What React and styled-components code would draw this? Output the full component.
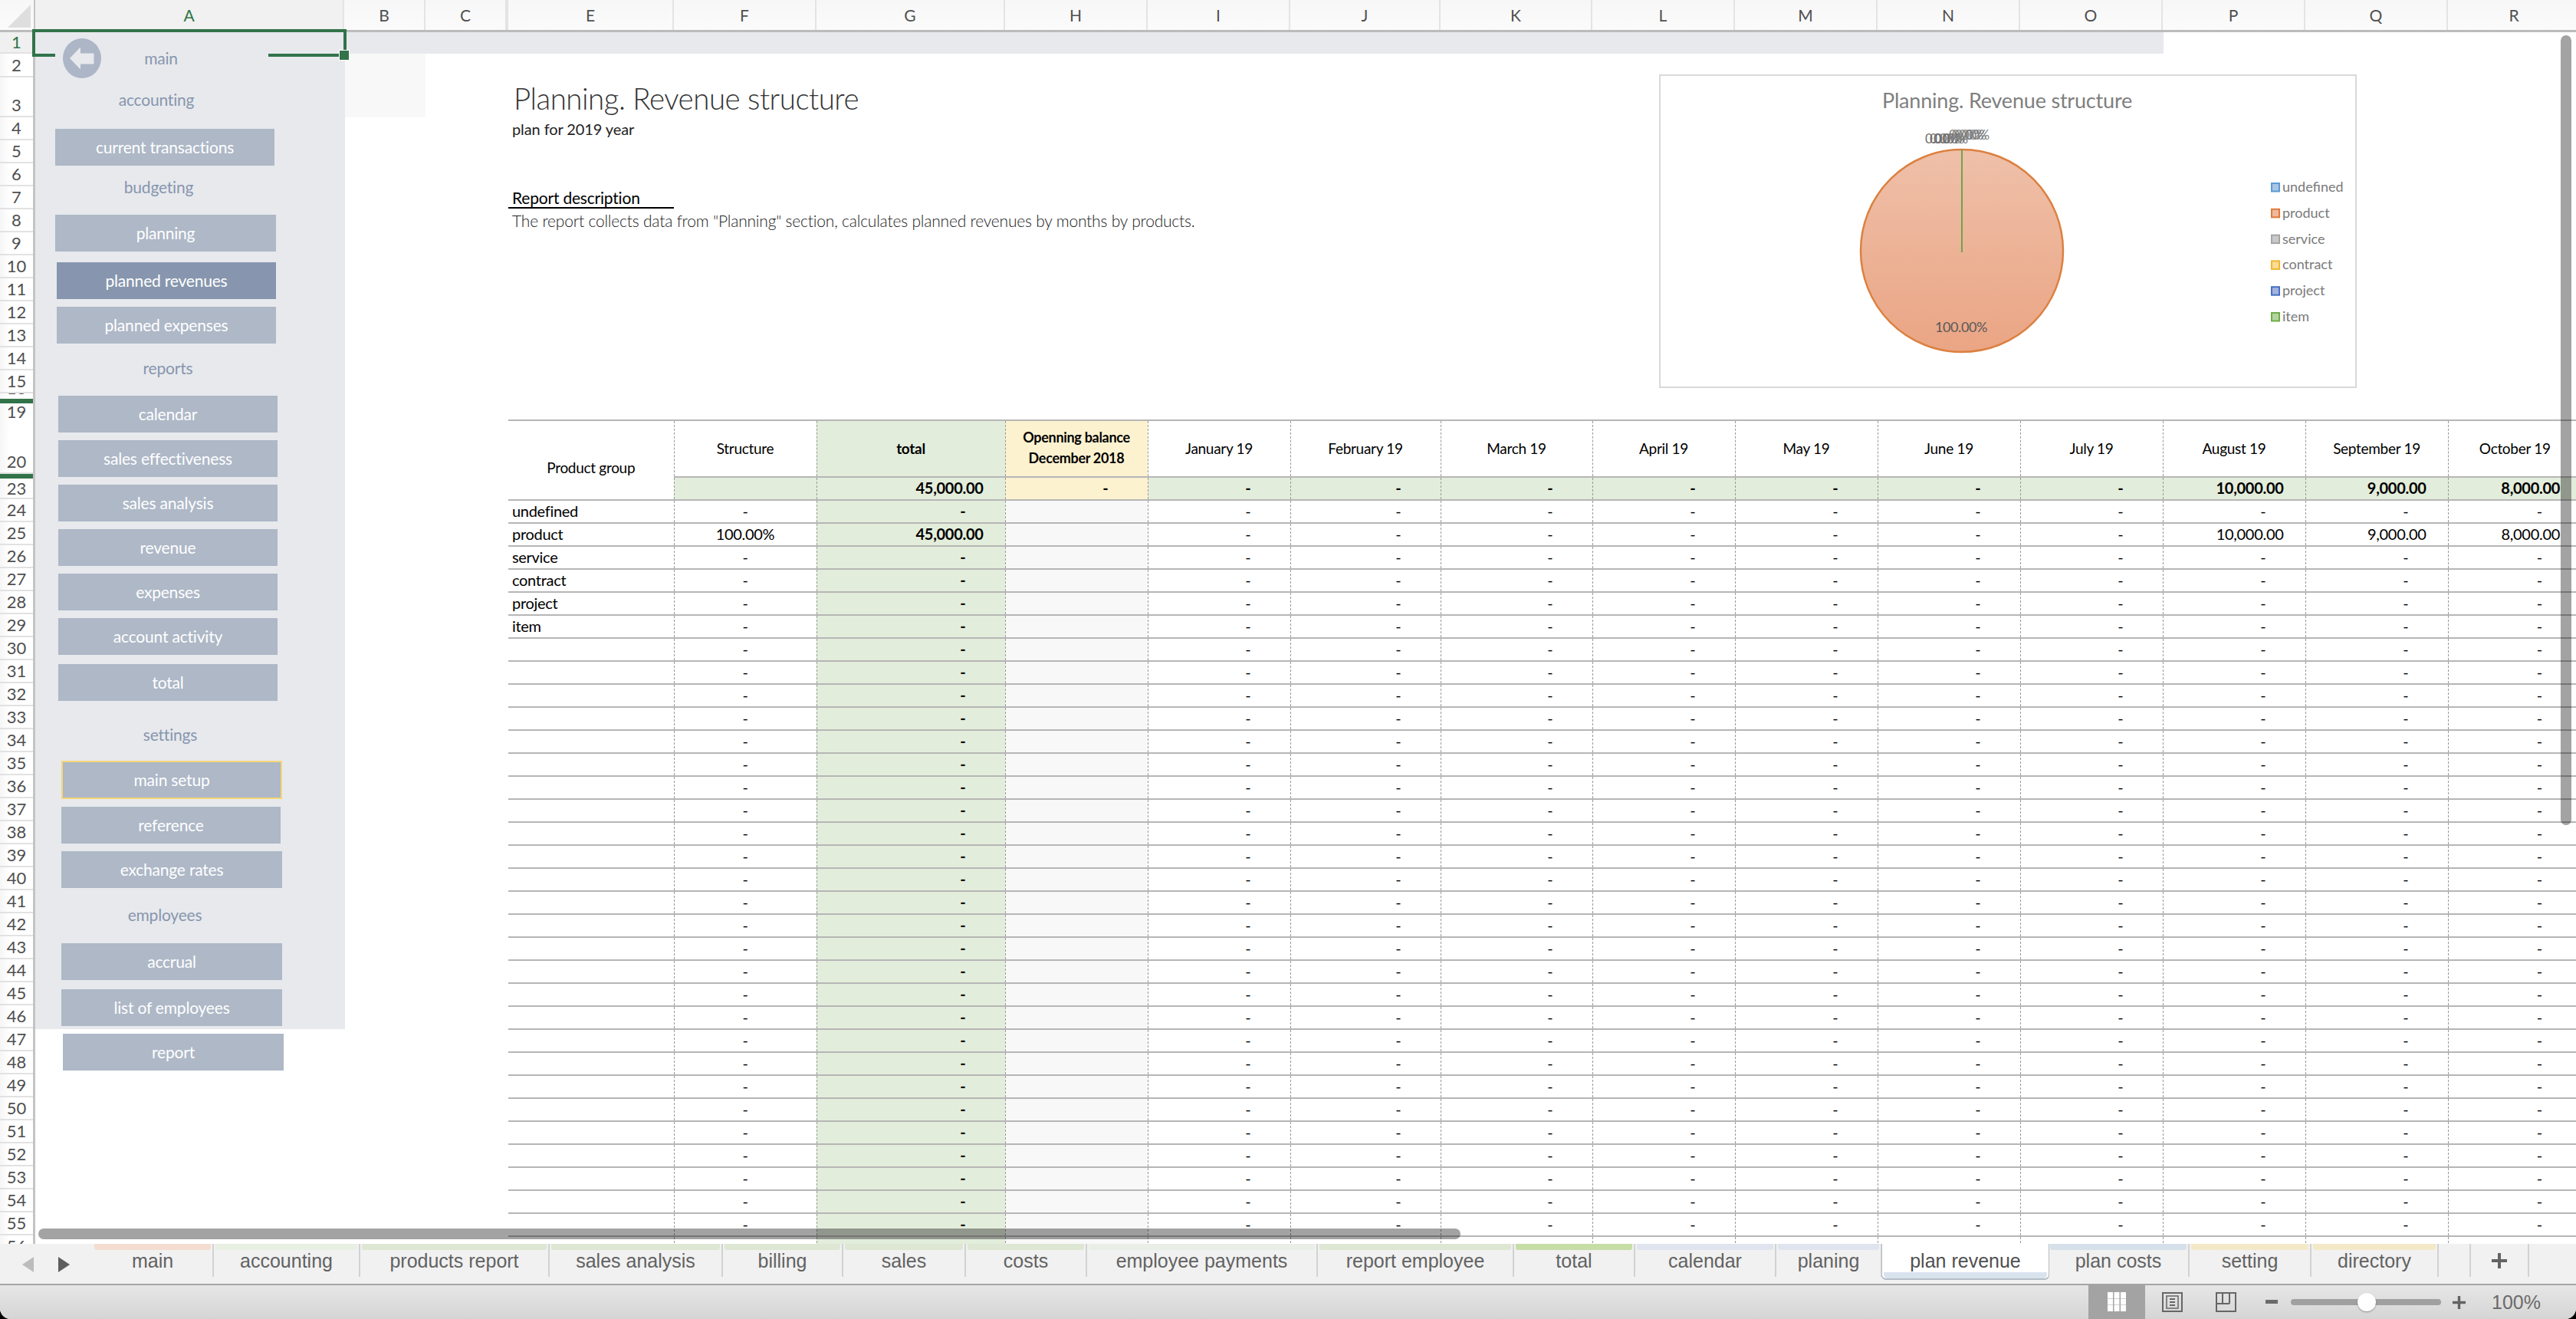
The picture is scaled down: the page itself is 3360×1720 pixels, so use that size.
import React from "react";
import styled, { createGlobalStyle } from "styled-components";

const GlobalStyle = createGlobalStyle`
  html, body {
    margin: 0;
    padding: 0;
    width: 3360px;
    height: 1720px;
    overflow: hidden;
    background: #000;
  }
  #root { height: 100%; }
`;

const SHEET_FONT = `"Lato", "Open Sans", sans-serif`;
const TAB_FONT = `"Liberation Sans", Arial, sans-serif`;

// column letters and their pixel widths, D is squeezed to almost nothing
const COLUMNS = [
  ["A", 403], ["B", 106], ["C", 106], ["", 2], ["E", 216], ["F", 186], ["G", 246], ["H", 186],
  ["I", 186], ["J", 196], ["K", 198], ["L", 186], ["M", 186], ["N", 186], ["O", 186], ["P", 186],
  ["Q", 186], ["R", 174],
];

const TABLE_WIDTHS = COLUMNS.slice(4).map((c) => c[1]);

const ROW_HEADS = [
  { n: 1, h: 28, active: true }, { n: 2, h: 31 }, { n: 3, h: 52, low: true },
  ...Array.from({ length: 12 }, (_, i) => ({ n: i + 4, h: 30 })),
  { n: 16, h: 7, low: true, cut: true }, { bar: true },
  { n: 19, h: 21, cut: true }, { n: 20, h: 71, low: true }, { bar: true }, { n: 23, h: 27 },
  ...Array.from({ length: 33 }, (_, i) => ({ n: i + 24, h: 30 })),
];

const NAV = [
  { kind: "label", text: "accounting", mt: 10, ml: 14 },
  { kind: "btn", text: "current transactions", mt: 20, ml: 26, w: 286 },
  { kind: "label", text: "budgeting", mt: 10, ml: 17 },
  { kind: "btn", text: "planning", mt: 18, ml: 26, w: 288 },
  { kind: "btn", text: "planned revenues", mt: 14, ml: 28, w: 286, on: true },
  { kind: "btn", text: "planned expenses", mt: 10, ml: 28, w: 286 },
  { kind: "label", text: "reports", mt: 14, ml: 29 },
  { kind: "btn", text: "calendar", mt: 18, ml: 30, w: 286 },
  { kind: "btn", text: "sales effectiveness", mt: 10, ml: 30, w: 286 },
  { kind: "btn", text: "sales analysis", mt: 10, ml: 30, w: 286 },
  { kind: "btn", text: "revenue", mt: 10, ml: 30, w: 286 },
  { kind: "btn", text: "expenses", mt: 10, ml: 30, w: 286 },
  { kind: "btn", text: "account activity", mt: 10, ml: 30, w: 286 },
  { kind: "btn", text: "total", mt: 12, ml: 30, w: 286 },
  { kind: "label", text: "settings", mt: 26, ml: 32 },
  { kind: "btn", text: "main setup", mt: 16, ml: 34, w: 288, mark: true },
  { kind: "btn", text: "reference", mt: 10, ml: 34, w: 286 },
  { kind: "btn", text: "exchange rates", mt: 10, ml: 34, w: 288 },
  { kind: "label", text: "employees", mt: 17, ml: 25 },
  { kind: "btn", text: "accrual", mt: 19, ml: 34, w: 288 },
  { kind: "btn", text: "list of employees", mt: 12, ml: 34, w: 288 },
];

const TABS = [
  ["main", 158, "#f4ddd0"], ["accounting", 191, "#e8efe3"], ["products report", 247, "#dde7d3"],
  ["sales analysis", 226, "#dde7d3"], ["billing", 157, "#dde7d3"], ["sales", 160, "#dde7d3"],
  ["costs", 158, "#dde7d3"], ["employee payments", 301, "#e9eee7"], ["report employee", 256, "#dde7d3"],
  ["total", 158, "#c6dda6"], ["calendar", 184, "#dfe4ef"], ["planing", 138, "#dfe4ef"],
  ["plan revenue", 217, "#d9e3ee", true], ["plan costs", 184, "#d5e0ea"], ["setting", 159, "#f4e9c7"],
  ["directory", 166, "#f4e9c7"],
];

const PRODUCTS = ["undefined", "product", "service", "contract", "project", "item"];
const MONTHS = [
  "January 19", "February 19", "March 19", "April 19", "May 19", "June 19", "July 19",
  "August 19", "September 19", "October 19",
];
const PLAN = { 7: "10,000.00", 8: "9,000.00", 9: "8,000.00" };

const LEGEND = [
  ["undefined", "#5b9bd5", "#a9c4e4"], ["product", "#e07b39", "#f0b89c"], ["service", "#a5a5a5", "#c9c9c9"],
  ["contract", "#f2b630", "#fbdc95"], ["project", "#4472c4", "#a3b3dd"], ["item", "#70ad47", "#b5d3a0"],
];

const GREEN = "#e3eddb";
const CREAM = "#fdf2d0";
const GRID_LINE = "#b6b6b6";

const Window = styled.div`
  width: 3360px;
  height: 1720px;
  display: flex;
  flex-direction: column;
  background: #fff;
  border-radius: 0 0 14px 14px;
  overflow: hidden;
`;

const Sheet = styled.div`
  flex: 1;
  min-height: 0;
  position: relative;
  overflow: hidden;
  font-family: ${SHEET_FONT};
`;

const ColumnBar = styled.div`
  display: flex;
  height: 42px;
  box-sizing: border-box;
  border-bottom: 3px solid #bcbcbc;
  background: linear-gradient(#f7f7f7, #fbfbfb);
`;

const Corner = styled.div`
  width: 46px;
  flex: none;
  box-sizing: border-box;
  padding: 6px 0 0 10px;
  border-right: 2px solid #c4c4c4;
`;

const ColumnHead = styled.div`
  flex: none;
  box-sizing: border-box;
  width: ${(p) => p.$w}px;
  display: flex;
  align-items: center;
  justify-content: center;
  border-right: 2px solid #e4e4e4;
  font-size: 21px;
  color: ${(p) => (p.$on ? "#2f7547" : "#505050")};
  background: ${(p) => (p.$on ? "#f1f1f1" : "transparent")};
`;

const Body = styled.div`
  display: flex;
`;

const RowBar = styled.div`
  width: 46px;
  flex: none;
  box-sizing: border-box;
  border-right: 3px solid #c4c4c4;
  background: #fff;
`;

const RowHead = styled.div`
  box-sizing: border-box;
  height: ${(p) => p.$h}px;
  display: flex;
  justify-content: center;
  align-items: ${(p) => (p.$low ? "flex-end" : "center")};
  overflow: hidden;
  font-size: 22px;
  line-height: 26px;
  padding-bottom: ${(p) => (p.$low ? 1 : 0)}px;
  border-bottom: ${(p) => (p.$cut ? "0" : "2px solid #e2e2e2")};
  color: ${(p) => (p.$on ? "#2f7547" : "#4f4f4f")};
  background: ${(p) => (p.$on ? "#f0f0f0" : "linear-gradient(90deg, #f6f6f6, #fff 30%)")};
`;

const HiddenRowMark = styled.div`
  height: 6px;
  background: #32734a;
`;

const LeftBlock = styled.div`
  display: flex;
  flex: none;
`;

const NavColumn = styled.div`
  width: 404px;
  flex: none;
`;

const NavPanel = styled.div`
  height: 1300px;
  box-sizing: border-box;
  padding-top: 8px;
  background: #e7e9ed;
  display: flex;
  flex-direction: column;
  align-items: flex-start;
`;

const BackRow = styled.div`
  display: flex;
  align-items: center;
  padding-left: 36px;
  height: 52px;
`;

const NavLabel = styled.div`
  width: 288px;
  height: 36px;
  line-height: 35px;
  text-align: center;
  font-size: 21px;
  letter-spacing: -0.2px;
  color: #8796ae;
  margin-top: ${(p) => p.$mt}px;
  margin-left: ${(p) => p.$ml}px;
`;

const MainLabel = styled(NavLabel)`
  width: 140px;
  margin: 0 0 0 8px;
`;

const NavButton = styled.div`
  flex: none;
  box-sizing: border-box;
  width: ${(p) => p.$w}px;
  height: ${(p) => (p.$mark ? 50 : 48)}px;
  margin-top: ${(p) => p.$mt}px;
  margin-left: ${(p) => p.$ml}px;
  padding-bottom: 2px;
  display: flex;
  align-items: center;
  justify-content: center;
  font-size: 21px;
  letter-spacing: -0.2px;
  color: #fff;
  background: ${(p) => (p.$on ? "#8796ae" : "#aeb8c7")};
  border: ${(p) => (p.$mark ? "2px solid #f6d676" : "0")};
`;

const Gutter = styled.div`
  width: 213px;
  flex: none;
`;

const Band = styled.div`
  height: 28px;
  background: #e7e9ed;
  width: ${(p) => p.$w};
`;

const PaleCell = styled.div`
  width: 105px;
  height: 83px;
  background: #f8f8f8;
`;

const Report = styled.div`
  flex: none;
  width: 2704px;
`;

const ReportHead = styled.div`
  display: flex;
  height: 477px;
`;

const Intro = styled.div`
  width: 1501px;
  flex: none;
`;

const Title = styled.div`
  margin: 36px 0 0 7px;
  font-size: 38.5px;
  line-height: 44px;
  font-weight: 300;
  letter-spacing: -0.5px;
  color: #333;
`;

const Subtitle = styled.div`
  margin: 5px 0 0 5px;
  font-size: 20px;
  line-height: 26px;
  letter-spacing: -0.1px;
  color: #222;
`;

const DescHead = styled.div`
  margin-top: 63px;
  width: 216px;
  box-sizing: border-box;
  height: 28px;
  padding-left: 5px;
  font-size: 21px;
  line-height: 27px;
  letter-spacing: -0.2px;
  color: #000;
  border-bottom: 2px solid #000;
`;

const DescText = styled.div`
  margin: 3px 0 0 5px;
  font-size: 21px;
  line-height: 26px;
  font-weight: 300;
  letter-spacing: -0.2px;
  color: #222;
`;

const ChartBox = styled.div`
  margin-top: 27px;
  width: 910px;
  height: 409px;
  flex: none;
  box-sizing: border-box;
  border: 2px solid #d9d9d9;
  background: #fff;
  svg {
    display: block;
    font-family: ${SHEET_FONT};
  }
`;

const Grid = styled.table`
  table-layout: fixed;
  border-collapse: collapse;
  width: 2704px;
  font-size: 20px;
  letter-spacing: -0.3px;
  color: #000;
`;

const Head = styled.th`
  font-weight: ${(p) => (p.$bold ? 700 : 400)};
  height: ${(p) => (p.$h ? `${p.$h}px` : "auto")};
  padding: ${(p) => (p.$group ? "18px 0 0" : "0 0 2px")};
  font-size: ${(p) => (p.$small ? 18 : 19)}px;
  line-height: 27px;
  text-align: center;
  background: ${(p) => p.$bg || "transparent"};
  border-top: 2px solid ${GRID_LINE};
  border-bottom: 2px solid ${GRID_LINE};
  border-left: ${(p) => (p.$group ? "0" : "1px dashed #999")};
`;

const Cell = styled.td`
  height: 30px;
  box-sizing: border-box;
  padding: 0 ${(p) => (p.$center ? 0 : p.$dash ? 51 : p.$left ? 0 : 28)}px 2px ${(p) => (p.$left ? 5 : 0)}px;
  text-align: ${(p) => (p.$center ? "center" : p.$left ? "left" : "right")};
  font-weight: ${(p) => (p.$bold ? 700 : 400)};
  background: ${(p) => p.$bg || "transparent"};
  border-bottom: 2px solid ${GRID_LINE};
  border-left: ${(p) => (p.$left ? "0" : "1px dashed #999")};
  white-space: nowrap;
`;

const SelectionBox = styled.div`
  position: absolute;
  left: 42px;
  top: 38px;
  width: 410px;
  height: 32px;
  box-sizing: border-box;
  border: 4px solid #32734a;
  border-bottom: 0;
`;

const SelectionEdge = styled.div`
  position: absolute;
  top: 28px;
  left: ${(p) => p.$x}px;
  width: ${(p) => p.$w}px;
  height: 4px;
  background: #32734a;
`;

const SelectionHandle = styled.div`
  position: absolute;
  left: 397px;
  top: 24px;
  width: 12px;
  height: 12px;
  background: #32734a;
  outline: 1px solid #fff;
`;

const ScrollV = styled.div`
  position: absolute;
  left: 3340px;
  top: 46px;
  width: 14px;
  height: 1030px;
  border-radius: 7px;
  background: rgba(0, 0, 0, 0.36);
`;

const ScrollH = styled.div`
  position: absolute;
  left: 50px;
  top: 1602px;
  width: 1855px;
  height: 14px;
  border-radius: 7px;
  background: rgba(0, 0, 0, 0.36);
`;

const TabBar = styled.div`
  flex: none;
  height: 54px;
  box-sizing: border-box;
  display: flex;
  border-bottom: 2px solid #a5a5a5;
  background: #f1f1f1;
  font-family: ${TAB_FONT};
`;

const TabNav = styled.div`
  width: 121px;
  flex: none;
  box-sizing: border-box;
  padding: 17px 0 0 29px;
  display: flex;
  gap: 32px;
  align-items: flex-start;
`;

const Tab = styled.div`
  flex: none;
  box-sizing: border-box;
  width: ${(p) => p.$w}px;
  height: ${(p) => (p.$active ? 45 : 43)}px;
  position: relative;
  text-align: center;
  font-size: 25px;
  line-height: 44px;
  color: ${(p) => (p.$active ? "#505050" : "#626262")};
  background: ${(p) => (p.$active ? "#fff" : "transparent")};
  border-right: ${(p) => (p.$active ? "0" : "2px solid #d2d2d2")};
  border-radius: ${(p) => (p.$active ? "0 0 5px 5px" : "0")};
  box-shadow: ${(p) => (p.$active ? "0 1px 0 1px #b5bcc4" : "none")};
  &::before {
    content: "";
    position: absolute;
    left: 2px;
    right: 2px;
    height: 8px;
    ${(p) => (p.$active ? "bottom: 0;" : "top: 0;")}
    background: ${(p) => p.$strip};
    border-radius: ${(p) => (p.$active ? "0 0 5px 5px" : "0 0 3px 3px")};
  }
`;

const TabGap = styled.div`
  flex: none;
  width: ${(p) => p.$w}px;
  height: 43px;
  box-sizing: border-box;
  border-right: 2px solid #d2d2d2;
  display: flex;
  align-items: center;
  justify-content: center;
`;

const StatusBar = styled.div`
  flex: none;
  height: 44px;
  display: flex;
  justify-content: flex-end;
  align-items: center;
  background: linear-gradient(#e6e6e6, #d5d5d5);
  font-family: ${TAB_FONT};
`;

const ViewButton = styled.div`
  width: ${(p) => p.$w}px;
  height: 44px;
  flex: none;
  display: flex;
  align-items: center;
  justify-content: center;
  background: ${(p) => (p.$on ? "#a3a3a3" : "transparent")};
`;

const ZoomSlider = styled.div`
  width: 196px;
  height: 8px;
  flex: none;
  margin-right: 15px;
  border-radius: 4px;
  background: #a0a0a0;
  position: relative;
`;

const ZoomThumb = styled.div`
  position: absolute;
  left: 87px;
  top: -8px;
  width: 24px;
  height: 24px;
  border-radius: 50%;
  background: #fff;
  box-shadow: 0 1px 2px rgba(0, 0, 0, 0.35);
`;

const ZoomText = styled.div`
  width: 62px;
  margin: 0 48px 0 34px;
  font-size: 25px;
  color: #6a6a6a;
  flex: none;
`;

const BackArrow = () => (
  <svg width="50" height="52" viewBox="0 0 50 52">
    <ellipse cx="25" cy="26" rx="25" ry="26" fill="#acb6c6" />
    <path d="M9.5 26 L22.5 12.5 V20 H40 V33 H22.5 V39.5 Z" fill="#e7e9ed" stroke="#e7e9ed" strokeWidth="1" strokeLinejoin="round" />
  </svg>
);

const PieChart = () => (
  <svg width="906" height="405" viewBox="0 0 906 405">
    <defs>
      <linearGradient id="pieFill" x1="0" y1="0" x2="0" y2="1">
        <stop offset="0" stopColor="#efc0a9" />
        <stop offset="1" stopColor="#eaa584" />
      </linearGradient>
    </defs>
    <text x="452" y="42" textAnchor="middle" fontSize="27" fill="#7f7f7f" letterSpacing="-0.2">
      Planning. Revenue structure
    </text>
    <circle cx="393" cy="228" r="132" fill="url(#pieFill)" stroke="#dc8040" strokeWidth="2.5" />
    <line x1="393" y1="96" x2="393" y2="230" stroke="#70a34f" strokeWidth="2" />
    {[345, 351, 356].map((x) => (
      <text key={x} x={x} y="88" fontSize="17" letterSpacing="-0.5" fill="#6f6f6f">0.00%</text>
    ))}
    {[376, 380, 384].map((x) => (
      <text key={x} x={x} y="83" fontSize="17" letterSpacing="-0.5" fill="#7f7f7f">0.00%</text>
    ))}
    <text x="392" y="334" textAnchor="middle" fontSize="18" letterSpacing="-0.4" fill="#595959">100.00%</text>
    {LEGEND.map(([name, line, fill], i) => (
      <g key={name}>
        <rect x="797" y={140 + i * 33.8} width="10" height="10.5" fill={fill} stroke={line} strokeWidth="2" />
        <text x="811" y={151 + i * 33.8} fontSize="18" fill="#7a7a7a">{name}</text>
      </g>
    ))}
  </svg>
);

const PrevIcon = ({ color }) => (
  <svg width="15" height="20" viewBox="0 0 15 20"><path d="M15 0 V20 L0 10 Z" fill={color} /></svg>
);

const NextIcon = ({ color }) => (
  <svg width="15" height="20" viewBox="0 0 15 20"><path d="M0 0 V20 L15 10 Z" fill={color} /></svg>
);

const NormalViewIcon = () => (
  <svg width="24" height="26" viewBox="0 0 24 26">
    {[0, 8.5, 17].map((y) => [0, 8.5, 17].map((x) => (
      <rect key={`${x}-${y}`} x={x} y={y} width="7" height="8" fill="#fff" />
    )))}
  </svg>
);

const PageViewIcon = () => (
  <svg width="27" height="26" viewBox="0 0 27 26" fill="none" stroke="#666">
    <rect x="1" y="1" width="25" height="24" strokeWidth="2" />
    <rect x="6" y="5" width="15" height="16" strokeWidth="1.5" />
    <path d="M10 9 H17 M10 13 H17 M10 17 H17" strokeWidth="2" />
  </svg>
);

const BreakViewIcon = () => (
  <svg width="27" height="26" viewBox="0 0 27 26" fill="none" stroke="#666">
    <rect x="1" y="1" width="25" height="24" strokeWidth="2" />
    <path d="M9 1 V15 H18 M18 1 V15 M1 15 H9" strokeWidth="2" />
  </svg>
);

const MinusIcon = () => (
  <svg width="16" height="6" viewBox="0 0 16 6"><rect width="16" height="5" fill="#6b6b6b" /></svg>
);

const PlusIcon = ({ size, weight }) => (
  <svg width={size} height={size} viewBox="0 0 20 20">
    <path d={`M${10 - weight / 2} 0 h${weight} v${10 - weight / 2} H20 v${weight} H${10 + weight / 2} V20 h${-weight} V${10 + weight / 2} H0 v${-weight} H${10 - weight / 2} Z`} fill="#636363" />
  </svg>
);

const ColumnHeader = () => (
  <ColumnBar>
    <Corner>
      <svg width="30" height="30" viewBox="0 0 30 30"><path d="M30 0 V30 H0 Z" fill="#dedede" /></svg>
    </Corner>
    {COLUMNS.map(([name, w], i) => (
      <ColumnHead key={i} $w={w} $on={name === "A"}>{name}</ColumnHead>
    ))}
  </ColumnBar>
);

const RowHeader = () => (
  <RowBar>
    {ROW_HEADS.map((r, i) =>
      r.bar ? (
        <HiddenRowMark key={i} />
      ) : (
        <RowHead key={i} $h={r.h} $low={r.low} $cut={r.cut} $on={r.active}>{r.n}</RowHead>
      )
    )}
  </RowBar>
);

const Navigation = () => (
  <NavColumn>
    <NavPanel>
      <BackRow>
        <BackArrow />
        <MainLabel>main</MainLabel>
      </BackRow>
      {NAV.map((item) =>
        item.kind === "label" ? (
          <NavLabel key={item.text} $mt={item.mt} $ml={item.ml}>{item.text}</NavLabel>
        ) : (
          <NavButton key={item.text} $mt={item.mt} $ml={item.ml} $w={item.w} $on={item.on} $mark={item.mark}>
            {item.text}
          </NavButton>
        )
      )}
    </NavPanel>
    <NavButton $mt={6} $ml={36} $w={288}>report</NavButton>
  </NavColumn>
);

const RevenueTable = () => (
  <Grid>
    <colgroup>
      {TABLE_WIDTHS.map((w, i) => <col key={i} style={{ width: w }} />)}
    </colgroup>
    <thead>
      <tr>
        <Head rowSpan={2} $group>Product group</Head>
        <Head $h={70}>Structure</Head>
        <Head $bold $bg={GREEN}>total</Head>
        <Head $bold $small $bg={CREAM}>Openning balance<br />December 2018</Head>
        {MONTHS.map((m) => <Head key={m}>{m}</Head>)}
      </tr>
      <tr>
        <Cell $bg={GREEN} />
        <Cell $bold $bg={GREEN}>45,000.00</Cell>
        <Cell $bold $dash $bg={CREAM}>-</Cell>
        {MONTHS.map((m, i) => (
          <Cell key={m} $bold $dash={!PLAN[i]} $bg={GREEN}>{PLAN[i] || "-"}</Cell>
        ))}
      </tr>
    </thead>
    <tbody>
      {Array.from({ length: 33 }, (_, row) => {
        const isProduct = row === 1;
        return (
          <tr key={row}>
            <Cell $left>{PRODUCTS[row] || ""}</Cell>
            <Cell $center>{isProduct ? "100.00%" : "-"}</Cell>
            <Cell $bold $dash={!isProduct} $bg={GREEN}>{isProduct ? "45,000.00" : "-"}</Cell>
            <Cell $bg="#f8f8f8" />
            {MONTHS.map((m, i) => {
              const value = isProduct ? PLAN[i] : null;
              return <Cell key={m} $dash={!value}>{value || "-"}</Cell>;
            })}
          </tr>
        );
      })}
    </tbody>
  </Grid>
);

const SheetTabs = () => (
  <TabBar>
    <TabNav>
      <PrevIcon color="#bcbcbc" />
      <NextIcon color="#5e5e5e" />
    </TabNav>
    {TABS.map(([name, w, strip, active]) => (
      <Tab key={name} $w={w} $strip={strip} $active={active}>{name}</Tab>
    ))}
    <TabGap $w={42} />
    <TabGap $w={76}><PlusIcon size={20} weight={4} /></TabGap>
  </TabBar>
);

const Footer = () => (
  <StatusBar>
    <ViewButton $w={74} $on><NormalViewIcon /></ViewButton>
    <ViewButton $w={71}><PageViewIcon /></ViewButton>
    <ViewButton $w={69}><BreakViewIcon /></ViewButton>
    <ViewButton $w={50}><MinusIcon /></ViewButton>
    <ZoomSlider><ZoomThumb /></ZoomSlider>
    <PlusIcon size={17} weight={4} />
    <ZoomText>100%</ZoomText>
  </StatusBar>
);

export default function App() {
  return (
    <Window>
      <GlobalStyle />
      <Sheet>
        <ColumnHeader />
        <Body>
          <RowHeader />
          <LeftBlock>
            <Navigation />
            <Gutter>
              <Band $w="100%" />
              <PaleCell />
            </Gutter>
          </LeftBlock>
          <Report>
            <Band $w="2159px" />
            <ReportHead>
              <Intro>
                <Title>Planning. Revenue structure</Title>
                <Subtitle>plan for 2019 year</Subtitle>
                <DescHead>Report description</DescHead>
                <DescText>The report collects data from "Planning" section, calculates planned revenues by months by products.</DescText>
              </Intro>
              <ChartBox><PieChart /></ChartBox>
            </ReportHead>
            <RevenueTable />
          </Report>
        </Body>
        <SelectionBox>
          <SelectionEdge $x={-4} $w={30} />
          <SelectionEdge $x={304} $w={92} />
          <SelectionHandle />
        </SelectionBox>
        <ScrollV />
        <ScrollH />
      </Sheet>
      <SheetTabs />
      <Footer />
    </Window>
  );
}
